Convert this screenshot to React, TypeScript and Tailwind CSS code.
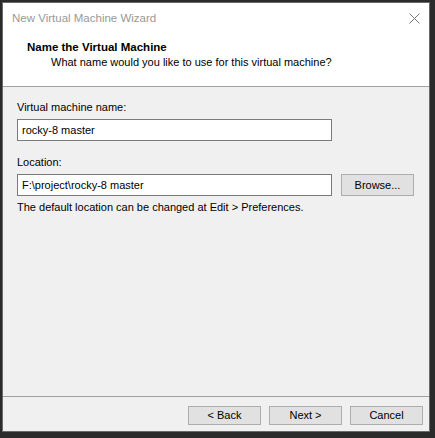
export default function App() {
  return (
    <div
      className="w-[435px] h-[438px] bg-[#2b2b2b] pt-[2px] pl-[2px]"
      style={{ fontFamily: '"Liberation Sans", Arial, sans-serif' }}
    >
      <div className="w-[428px] h-[430px] border border-[#6a6a6a] flex flex-col bg-[#f0f0f0] text-[11px] text-black">
        {/* Title bar */}
        <div className="h-[30px] bg-white flex items-center justify-between pl-[9px] pr-[9px]">
          <span className="text-[#999999] text-[11.5px] leading-[15px]">New Virtual Machine Wizard</span>
          <svg width="11" height="11" viewBox="0 0 11 11">
            <path d="M0.5 0.5 L10.5 10.5 M10.5 0.5 L0.5 10.5" stroke="#777777" strokeWidth="1" />
          </svg>
        </div>

        {/* Header */}
        <div className="h-[54px] bg-white border-b border-[#a0a0a0] pl-[24px] pt-[7px]">
          <div className="font-bold text-[11.5px] leading-[15px]">Name the Virtual Machine</div>
          <div className="leading-[15px] pl-[24px]">What name would you like to use for this virtual machine?</div>
        </div>

        {/* Body */}
        <div className="flex-1 pl-[14px] pt-[13px]">
          <div className="leading-[15px]">Virtual machine name:</div>
          <div className="mt-[4px] w-[315px] h-[22px] bg-white border border-[#7a7a7a] flex items-center pl-[4px] leading-[15px]">
            rocky-8 master
          </div>
          <div className="mt-[14px] leading-[15px]">Location:</div>
          <div className="mt-[4px] flex gap-[9px]">
            <div className="w-[315px] h-[22px] bg-white border border-[#7a7a7a] flex items-center pl-[4px] leading-[15px]">
              F:\project\rocky-8 master
            </div>
            <div className="w-[73px] h-[22px] bg-[#e1e1e1] border border-[#adadad] flex items-center justify-center">
              Browse...
            </div>
          </div>
          <div className="mt-[4px] leading-[15px]">The default location can be changed at Edit &gt; Preferences.</div>
        </div>

        {/* Footer */}
        <div className="h-[35px] border-t border-[#a0a0a0] flex justify-end gap-[8px] pr-[6px] pt-[9px]">
          <div className="w-[73px] h-[19px] bg-[#e1e1e1] border border-[#adadad] flex items-center justify-center">&lt; Back</div>
          <div className="w-[73px] h-[19px] bg-[#e1e1e1] border border-[#adadad] flex items-center justify-center">Next &gt;</div>
          <div className="w-[73px] h-[19px] bg-[#e1e1e1] border border-[#adadad] flex items-center justify-center">Cancel</div>
        </div>
      </div>
    </div>
  );
}
